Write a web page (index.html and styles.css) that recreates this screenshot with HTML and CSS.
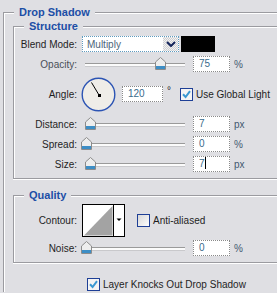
FILE: index.html
```html
<!DOCTYPE html>
<html>
<head>
<meta charset="utf-8">
<link rel="stylesheet" href="styles.css">
</head>
<body>
<div class="dialog">
  <fieldset class="group outer">
    <legend>Drop Shadow</legend>
    <fieldset class="group inner">
      <legend>Structure</legend>
      <div class="row">
        <span class="lbl">Blend Mode:</span>
        <div class="select">
          <span class="sel-text">Multiply</span>
          <span class="sel-btn"><svg width="10" height="6" viewBox="0 0 10 6"><path d="M1 1 L5 5 L9 1" fill="none" stroke="#14245a" stroke-width="2"/></svg></span>
        </div>
        <span class="swatch"></span>
      </div>
      <div class="row">
        <span class="lbl lbl-soft">Opacity:</span>
        <div class="slider"><div class="track"></div><span class="thumb" style="left:73px"><svg width="11" height="13" viewBox="0 0 11 13"><path d="M5.5 0.5 L10.5 5 V12.5 H0.5 V5 Z" fill="#eeeeee" stroke="#8c8c8c"/><rect x="1" y="9" width="9" height="3" fill="#3d8ec6"/></svg></span></div>
        <span class="num">75</span><span class="unit">%</span>
      </div>
      <div class="row row-angle">
        <span class="lbl">Angle:</span>
        <svg class="dial" width="35" height="35" viewBox="0 0 35 35"><circle cx="17.5" cy="17.5" r="16.3" fill="#efede8" stroke="#2c54b4" stroke-width="1.4"/><line x1="18" y1="18" x2="10.5" y2="5.5" stroke="#000" stroke-width="1"/><rect x="17" y="17" width="3" height="3" fill="#000"/></svg>
        <span class="num num-wide">120</span><span class="deg">°</span>
        <svg class="cb" width="13" height="13" viewBox="0 0 13 13"><rect x="0.5" y="0.5" width="12" height="12" fill="#f4f4f4" stroke="#1e3f96"/><path d="M3 6.2 L5.6 9 L10 3.2" fill="none" stroke="#3a98d2" stroke-width="2"/></svg>
        <span class="cb-text">Use Global Light</span>
      </div>
      <div class="row">
        <span class="lbl">Distance:</span>
        <div class="slider"><div class="track"></div><span class="thumb" style="left:3px"><svg width="11" height="13" viewBox="0 0 11 13"><path d="M5.5 0.5 L10.5 5 V12.5 H0.5 V5 Z" fill="#eeeeee" stroke="#8c8c8c"/><rect x="1" y="9" width="9" height="3" fill="#3d8ec6"/></svg></span></div>
        <span class="num">7</span><span class="unit">px</span>
      </div>
      <div class="row">
        <span class="lbl">Spread:</span>
        <div class="slider"><div class="track"></div><span class="thumb" style="left:-1px"><svg width="11" height="13" viewBox="0 0 11 13"><path d="M5.5 0.5 L10.5 5 V12.5 H0.5 V5 Z" fill="#eeeeee" stroke="#8c8c8c"/><rect x="1" y="9" width="9" height="3" fill="#3d8ec6"/></svg></span></div>
        <span class="num">0</span><span class="unit">%</span>
      </div>
      <div class="row">
        <span class="lbl">Size:</span>
        <div class="slider"><div class="track"></div><span class="thumb" style="left:3px"><svg width="11" height="13" viewBox="0 0 11 13"><path d="M5.5 0.5 L10.5 5 V12.5 H0.5 V5 Z" fill="#eeeeee" stroke="#8c8c8c"/><rect x="1" y="9" width="9" height="3" fill="#3d8ec6"/></svg></span></div>
        <span class="num">7<span class="caret"></span></span><span class="unit">px</span>
      </div>
    </fieldset>
    <fieldset class="group quality">
      <legend>Quality</legend>
      <div class="row row-contour">
        <span class="lbl">Contour:</span>
        <svg class="contour" width="43" height="33" viewBox="0 0 43 33"><rect x="0.5" y="0.5" width="42" height="32" fill="#fff" stroke="#000"/><polygon points="2,31.5 30.5,2 30.5,31.5" fill="#a3a3a3"/><line x1="31.5" y1="0" x2="31.5" y2="33" stroke="#000"/><polygon points="34.5,14.5 39.5,14.5 37,17" fill="#000"/></svg>
        <svg class="cb cb-aa" width="13" height="13" viewBox="0 0 13 13"><defs><linearGradient id="g" x1="0" y1="0" x2="1" y2="1"><stop offset="0" stop-color="#d6d6d6"/><stop offset="1" stop-color="#ffffff"/></linearGradient></defs><rect x="0.5" y="0.5" width="12" height="12" fill="url(#g)" stroke="#1e3f96"/></svg>
        <span class="cb-text">Anti-aliased</span>
      </div>
      <div class="row">
        <span class="lbl">Noise:</span>
        <div class="slider"><div class="track"></div><span class="thumb" style="left:-1px"><svg width="11" height="13" viewBox="0 0 11 13"><path d="M5.5 0.5 L10.5 5 V12.5 H0.5 V5 Z" fill="#eeeeee" stroke="#8c8c8c"/><rect x="1" y="9" width="9" height="3" fill="#3d8ec6"/></svg></span></div>
        <span class="num">0</span><span class="unit">%</span>
      </div>
    </fieldset>
    <div class="row row-knock">
      <svg class="cb" width="13" height="13" viewBox="0 0 13 13"><rect x="0.5" y="0.5" width="12" height="12" fill="#f4f4f4" stroke="#1e3f96"/><path d="M3 6.2 L5.6 9 L10 3.2" fill="none" stroke="#3a98d2" stroke-width="2"/></svg>
      <span class="cb-text">Layer Knocks Out Drop Shadow</span>
    </div>
  </fieldset>
</div>
</body>
</html>
```

FILE: styles.css
```css
html, body {
  margin: 0;
  padding: 0;
}
body {
  background: #dfdfe3;
  font-family: "Liberation Sans", Arial, sans-serif;
  font-size: 10px;
  color: #1e1e1e;
  width: 277px;
  height: 293px;
  overflow: hidden;
}
.dialog {
  width: 277px;
}
.group {
  border: 1px solid #9b9ba0;
  border-right: 0;
  box-shadow: inset 1px 1px 0 #ffffff, 0 1px 0 #ffffff;
  margin: 0;
  padding: 0;
  min-width: 0;
}
.group > legend {
  font-weight: bold;
  font-size: 11px;
  line-height: 13px;
  color: #1c4ea6;
  padding: 0 5px;
  margin-left: 10px;
  background: #dfdfe3;
}
.outer {
  margin: 6px 0 0 3px;
  border-bottom: 0;
  box-shadow: inset 1px 1px 0 #ffffff;
}
.inner {
  margin: 1px 0 0 9px;
  padding: 1px 0 4px;
}
.quality {
  margin: 10px 0 0 9px;
  padding: 0 0 4px;
}
.row {
  display: flex;
  align-items: center;
  height: 20px;
}
.row-angle {
  height: 40px;
}
.row-contour {
  height: 36px;
}
.lbl {
  flex: none;
  width: 63px;
  margin-right: 5px;
  text-align: right;
  white-space: nowrap;
}
.lbl-soft {
  color: #4a4f58;
}
.select {
  flex: none;
  box-sizing: border-box;
  width: 97px;
  height: 16px;
  border: 1px dotted #5f9cc0;
  background: #fff;
  display: flex;
  align-items: center;
}
.sel-text {
  flex: 1;
  padding-left: 4px;
  color: #4d6578;
}
.sel-btn {
  flex: none;
  width: 15px;
  height: 14px;
  display: flex;
  align-items: center;
  justify-content: center;
  background: repeating-conic-gradient(#cfcfd2 0 25%, #f2f2f2 0 50%) 0 0 / 2px 2px;
}
.swatch {
  flex: none;
  width: 34px;
  height: 16px;
  margin-left: 2px;
  background: #000;
}
.slider {
  flex: none;
  position: relative;
  width: 106px;
  height: 20px;
}
.track {
  margin: 9px 3px 0;
  height: 2px;
  border-top: 1px solid #9a9a9a;
  border-bottom: 1px solid #c9c9cc;
  background: #fbfbfb;
}
.thumb {
  position: absolute;
  top: 3px;
  width: 11px;
  height: 13px;
  line-height: 0;
}
.num {
  flex: none;
  box-sizing: border-box;
  width: 37px;
  height: 16px;
  margin-left: 5px;
  padding-left: 5px;
  border: 1px dotted #8a8a8a;
  background: #fff;
  color: #3a6b8c;
  line-height: 14px;
  position: relative;
}
.num-wide {
  width: 41px;
  margin-left: 6px;
}
.caret {
  display: inline-block;
  width: 1px;
  height: 12px;
  background: #000;
  vertical-align: -2px;
}
.unit {
  margin-left: 4px;
  color: #3f5870;
}
.deg {
  margin-left: 4px;
  align-self: flex-start;
  margin-top: 11px;
}
.dial {
  flex: none;
  margin-left: -1px;
}
.cb {
  flex: none;
  margin-left: 9px;
}
.cb-aa {
  margin-left: 12px;
}
.cb-text {
  margin-left: 3px;
  white-space: nowrap;
}
.contour {
  flex: none;
}
.row-knock {
  margin-top: 13px;
  height: 16px;
  padding-left: 74px;
}
```
